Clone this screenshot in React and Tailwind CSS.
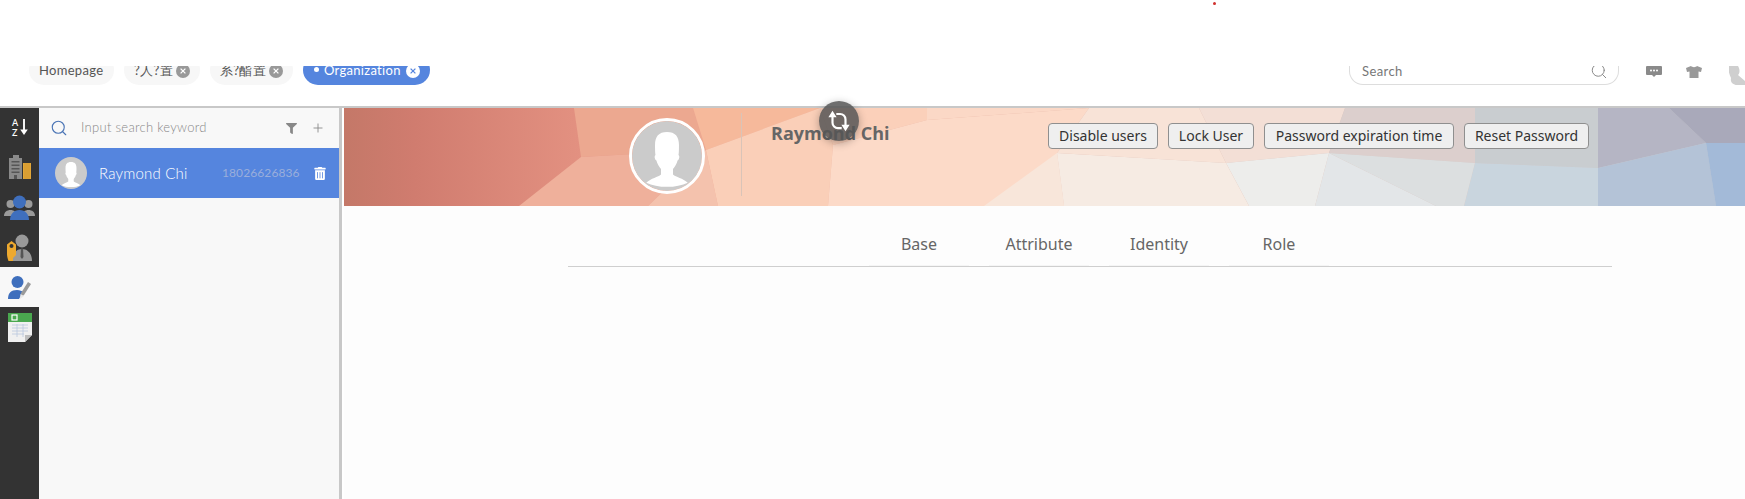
import React from "react";
import { Search, Plus } from "lucide-react";
import { FaFilter, FaTrashAlt } from "react-icons/fa";

const polys = [
  ["230,0 349,0 362,42 237,49", "#eca890"],
  ["237,49 175,98 304,98 362,42", "#efb09b"],
  ["304,98 362,42 374,98", "#f4c2ad"],
  ["349,0 476,0 362,42", "#f6b99b"],
  ["362,42 476,0 489,37 484,98 374,98", "#facfb8"],
  ["476,0 583,0 583,12 489,37", "#fbd0ba"],
  ["489,37 583,12 745,0 713,45 720,98 484,98", "#fcdac8"],
  ["583,0 745,0 583,12", "#fbd8c6"],
  ["640,98 713,45 720,98", "#f8e6da"],
  ["745,0 855,0 882,55 713,45", "#f8e3d7"],
  ["855,0 1001,0 985,45 882,55", "#f3dfd6"],
  ["1001,0 1131,0 1131,55 985,45", "#dccfcd"],
  ["1131,0 1254,0 1254,60 1131,55", "#c9cdd0"],
  ["1254,0 1325,0 1362,35 1254,60", "#b5b5c4"],
  ["1325,0 1401,0 1401,35 1362,35", "#a9a9ba"],
  ["1254,60 1362,35 1372,98 1254,98", "#b4c3d7"],
  ["1362,35 1401,35 1401,98 1372,98", "#a3bad8"],
  ["1131,55 1254,60 1254,98 1120,98", "#c9d5de"],
  ["985,45 1131,55 1120,98 1092,98", "#dcdfe0"],
  ["985,45 1092,98 971,98", "#e3e6e8"],
  ["882,55 985,45 971,98 905,98", "#ededeb"],
  ["713,45 882,55 905,98 720,98", "#f6ebe3"],
];

function Person({ className }) {
  return (
    <svg viewBox="0 0 76 76" className={className}>
      <circle cx="38" cy="38" r="38" fill="#cbcbcb" />
      <path
        d="M38 12c-9 0-13 5-13 14 0 4 0 8 .5 11-1.500 1-1 5 1 6 1 4 3 7 5 9v6c-3 3-11 4-16 9 6 3 14 4.500 22.500 4.500s16.500-1.500 22.500-4.500c-5-5-13-6-16-9v-6c2-2 4-5 5-9 2-1 2.500-5 1-6 .5-3 .5-7 .5-11 0-9-4-14-13-14z"
        fill="#fff"
      />
    </svg>
  );
}

function Tab({ label, active, closable, width }) {
  return (
    <div
      className={`flex h-[30px] -mt-[11px] shrink-0 items-center rounded-full pt-[1px] pl-[10px] pr-[10px] ${width} ${active ? "bg-[#5585de] text-white" : "bg-[#f7f7f7] text-[#555]"}`}
    >
      {active && <span className="mr-[5px] ml-[1px] -mt-[3px] h-[5px] w-[5px] rounded-full bg-white" />}
      <span className="whitespace-nowrap text-[13px] tracking-[0.3px]">{label}</span>
      {closable && (
        <span
          className={`ml-auto flex h-[14px] w-[14px] items-center justify-center rounded-full ${active ? "bg-white" : "bg-[#999]"}`}
        >
          <svg viewBox="0 0 10 10" className="h-[8px] w-[8px]">
            <path d="M2 2l6 6M8 2l-6 6" stroke={active ? "#5585de" : "#fff"} strokeWidth="1.600" />
          </svg>
        </span>
      )}
    </div>
  );
}

function SideIcons() {
  return (
    <div className="flex w-[39px] shrink-0 flex-col bg-[#333333]">
      <div className="flex h-[39px] items-center justify-center gap-[2px] pl-[1px]">
        <div className="flex flex-col text-[9px] leading-[10px] font-semibold text-white">
          <span>A</span>
          <span>Z</span>
        </div>
        <svg viewBox="0 0 8 18" className="h-[17px] w-[8px]">
          <path d="M4 0v13" stroke="#fff" strokeWidth="2" />
          <path d="M0 11h8l-4 6z" fill="#fff" />
        </svg>
      </div>
      <div className="flex h-[40px] items-center justify-center">
        <svg viewBox="0 0 22 24" className="h-[24px] w-[22px]">
          <path d="M0 3h4V0h6v3h3v21H0z" fill="#8a8a8a" />
          <path d="M2.500 6h8v1.500h-8zM2.500 9.500h8V11h-8zM2.500 13h8v1.500h-8zM2.500 16.500h8V18h-8z" fill="#565656" />
          <rect x="5" y="20" width="3" height="4" fill="#565656" />
          <rect x="14" y="8" width="8" height="16" fill="#e3a737" />
          <path d="M16 8v16M18 8v16M20 8v16" stroke="#c48b28" strokeWidth=".6" />
        </svg>
      </div>
      <div className="flex h-[40px] items-center justify-center">
        <svg viewBox="0 0 31 25" className="h-[25px] w-[31px]">
          <circle cx="6.500" cy="9" r="4" fill="#9a9a9a" />
          <path d="M0 21c0-4 3-6 6.500-6s6 2 6 6z" fill="#9a9a9a" />
          <circle cx="24.500" cy="9" r="4" fill="#9a9a9a" />
          <path d="M18 21c0-4 3-6 6.500-6s6.500 2 6.500 6z" fill="#9a9a9a" />
          <circle cx="15.500" cy="7" r="6.500" fill="#3f6fbd" />
          <path d="M6 25c0-6 4-10 9.500-10S25 19 25 25z" fill="#3f6fbd" />
        </svg>
      </div>
      <div className="flex h-[40px] items-center justify-center">
        <svg viewBox="0 0 25 27" className="h-[27px] w-[25px]">
          <circle cx="15" cy="7" r="6.500" fill="#999" />
          <path d="M5 27c0-7 4-12 10-12s10 5 10 12z" fill="#999" />
          <path d="M14 14l1 1 1-1 .5 9-1.500 2-1.500-2z" fill="#555" />
          <path d="M4.500 7l4.500 3.500V21l-3 3v3H1.500C.5 24 0 22 0 20V10.500z" fill="#eda92f" />
          <circle cx="4.500" cy="12" r="2" fill="#333" />
        </svg>
      </div>
      <div className="flex h-[40px] items-center justify-center bg-[#f8f8f8]">
        <svg viewBox="0 0 23 23" className="h-[23px] w-[23px]">
          <circle cx="9.500" cy="6" r="6" fill="#3f6fbd" />
          <path d="M0 23c0-6 3-9 9-9 3 0 5 1 6 2l-4 7z" fill="#3f6fbd" />
          <path d="M13 17l7-11 3 2-7 11-3.500 2.500z" fill="#9a9a9a" />
          <path d="M12 23l.5-5 3.500 2z" fill="#e8e8e8" />
        </svg>
      </div>
      <div className="flex h-[40px] items-start justify-center pt-[6px]">
        <svg viewBox="0 0 24 29" className="h-[29px] w-[24px]">
          <path d="M0 0h24v22l-7 7H0z" fill="#f0f0f0" />
          <rect width="24" height="9" fill="#4aa84f" />
          <rect x="4" y="2" width="5" height="5" fill="none" stroke="#fff" strokeWidth="1.200" />
          <path d="M4 12h16M4 15h16M4 18h16M4 21h12M9 11v13M15 11v13" stroke="#b9c6dd" strokeWidth=".8" />
          <path d="M17 29v-7h7z" fill="#bdbdbd" />
        </svg>
      </div>
    </div>
  );
}

function ListPanel() {
  return (
    <div className="flex w-[300px] shrink-0 flex-col bg-[#f8f8f8]">
      <div className="flex h-[40px] items-center pl-[11px] pr-[14px]">
        <Search className="h-[18px] w-[18px] text-[#4a74b5]" strokeWidth={1.500} />
        <span className="ml-[13px] flex-1 text-[13px] font-light tracking-[0.3px] text-[#888]">Input search keyword</span>
        <FaFilter className="h-[11px] w-[11px] text-[#888]" />
        <Plus className="ml-[14px] h-[14px] w-[14px] text-[#888]" strokeWidth={1.500} />
      </div>
      <div className="flex h-[50px] items-center bg-[#5585de] pl-[16px] pr-[13px]">
        <Person className="h-[32px] w-[32px] shrink-0" />
        <span className="ml-[12px] w-[123px] text-[15px] font-light tracking-[0.2px] text-white">Raymond Chi</span>
        <span className="w-[92px] text-[12px] tracking-[0.1px] text-[#9aaedb]">18026626836</span>
        <FaTrashAlt className="h-[13px] w-[12px] text-white" />
      </div>
    </div>
  );
}

function Banner() {
  return (
    <div className="relative flex h-[98px] items-start overflow-hidden pl-[285px]">
      <svg
        viewBox="0 0 1401 98"
        preserveAspectRatio="none"
        className="absolute inset-0 h-full w-full"
      >
        <defs>
          <linearGradient id="bn" x1="0" x2="1" y1="0" y2="0">
            <stop offset="0" stopColor="#c47868" />
            <stop offset="0.05" stopColor="#d07c6f" />
            <stop offset="0.17" stopColor="#e39181" />
            <stop offset="0.3" stopColor="#f0ae97" />
            <stop offset="1" stopColor="#c8cdd2" />
          </linearGradient>
        </defs>
        <rect width="1401" height="98" fill="url(#bn)" />
        {polys.map(([p, c], i) => (
          <polygon key={i} points={p} fill={c} />
        ))}
      </svg>
      <Person className="relative mt-[10px] h-[76px] w-[76px] rounded-full border-[3px] border-white" />
      <div className="relative mt-[5px] ml-[36px] h-[83px] w-px bg-[#d9c4b8]" />
      <div className="relative mt-[12px] ml-[29px] w-[277px] font-['Open_Sans'] text-[18px] leading-[26px] font-bold text-[#666]">
        Raymond Chi
      </div>
      <div className="relative mt-[15px] flex gap-[10px] font-['Noto_Sans'] text-[14px] text-[#333]">
        {[
          ["Disable users", "w-[110px]"],
          ["Lock User", "w-[86px]"],
          ["Password expiration time", "w-[190px]"],
          ["Reset Password", "w-[125px]"],
        ].map(([t, w]) => (
          <button
            key={t}
            className={`${w} h-[26px] rounded-[4px] border border-[#8f8f8f] bg-[#efefef] leading-[22px] whitespace-nowrap`}
          >
            {t}
          </button>
        ))}
      </div>
    </div>
  );
}

export default function App() {
  return (
    <div className="relative flex h-[499px] w-[1745px] flex-col overflow-hidden bg-white font-['Lato',sans-serif]">
      <span className="absolute top-[2px] left-[1213px] h-[3px] w-[3px] rounded-full bg-[#d0312d]" />
      <header className="flex h-[106px] shrink-0 items-start pt-[66px]">
        <div className="ml-[29px] flex h-[19px] items-start gap-[10px] overflow-hidden">
          <Tab label="Homepage" width="w-[85px]" />
          <Tab label="?人?置" closable width="w-[76px]" />
          <Tab label="系?酯置" closable width="w-[83px]" />
          <Tab label="Organization" active closable width="w-[127px]" />
        </div>
        <div className="ml-auto flex h-[20px] items-start overflow-hidden">
          <div className="flex h-[19px] w-[270px] items-start justify-between rounded-b-[14px] border border-t-0 border-[#ddd] pr-[10px] pl-[12px]">
            <span className="text-[13px] leading-[10px] pt-[0px] tracking-[0.4px] text-[#777]">Search</span>
            <Search className="h-[18px] w-[18px] -translate-y-[4px] text-[#888]" strokeWidth={1.300} />
          </div>
          <svg viewBox="0 0 16 11" className="ml-[27px] h-[11px] w-[16px]">
            <path d="M1 0h14a1 1 0 0 1 1 1v7a1 1 0 0 1-1 1h-5l-2 2-2-2H1a1 1 0 0 1-1-1V1a1 1 0 0 1 1-1z" fill="#8a8a8a" />
            <circle cx="5" cy="4.500" r="1" fill="#fff" />
            <circle cx="8" cy="4.500" r="1" fill="#fff" />
            <circle cx="11" cy="4.500" r="1" fill="#fff" />
          </svg>
          <svg viewBox="0 0 16 12" className="ml-[24px] h-[12px] w-[16px]">
            <path d="M5 0c1 1.500 5 1.500 6 0l5 2-1 4-2.500-.5V12h-9V5.500L1 6 0 2z" fill="#999" />
          </svg>
          <svg viewBox="0 0 16 19" className="ml-[27px] h-[19px] w-[16px]">
            <path d="M0 0h9c2 3 2 7 0 9l7 6v4H8c-4 0-7-3-6-7C0 8-1 4 0 0z" fill="#cfcfcf" />
          </svg>
        </div>
      </header>
      <div className="h-[2px] shrink-0 bg-[#c8c8c8]" />
      <div className="flex min-h-0 flex-1">
        <SideIcons />
        <ListPanel />
        <div className="w-[3px] shrink-0 bg-[#c8c8c8]" />
        <main className="ml-[2px] min-w-0 flex-1 bg-[#fdfdfd]">
          <Banner />
          <div className="ml-[224px] mr-[133px] mt-[22px] flex h-[39px] border-b border-[#cfcfcf] pl-[301px] font-['Noto_Sans'] text-[16px] text-[#666]">
            {["Base", "Attribute", "Identity", "Role"].map((t) => (
              <div key={t} className="mr-[20px] w-[100px] border-b border-[#f5f5f5] text-center leading-[33px]">
                {t}
              </div>
            ))}
          </div>
        </main>
      </div>
      <div className="absolute top-[101px] left-[819px] flex h-[40px] w-[40px] items-center justify-center rounded-full bg-[#555]/85 shadow-[0_2px_8px_rgba(0,0,0,0.3)]">
        <svg viewBox="0 0 24 24" className="h-[26px] w-[26px]" fill="none">
          <path d="M6 8v5.500a5 5 0 0 0 5 5h3.500M18 16v-5.500a5 5 0 0 0-5-5H9.500" stroke="#fff" strokeWidth="2" />
          <path d="M6 2.500L2.200 8.500h7.600zM18 21.500l3.800-6h-7.600z" fill="#fff" />
        </svg>
      </div>
    </div>
  );
}
